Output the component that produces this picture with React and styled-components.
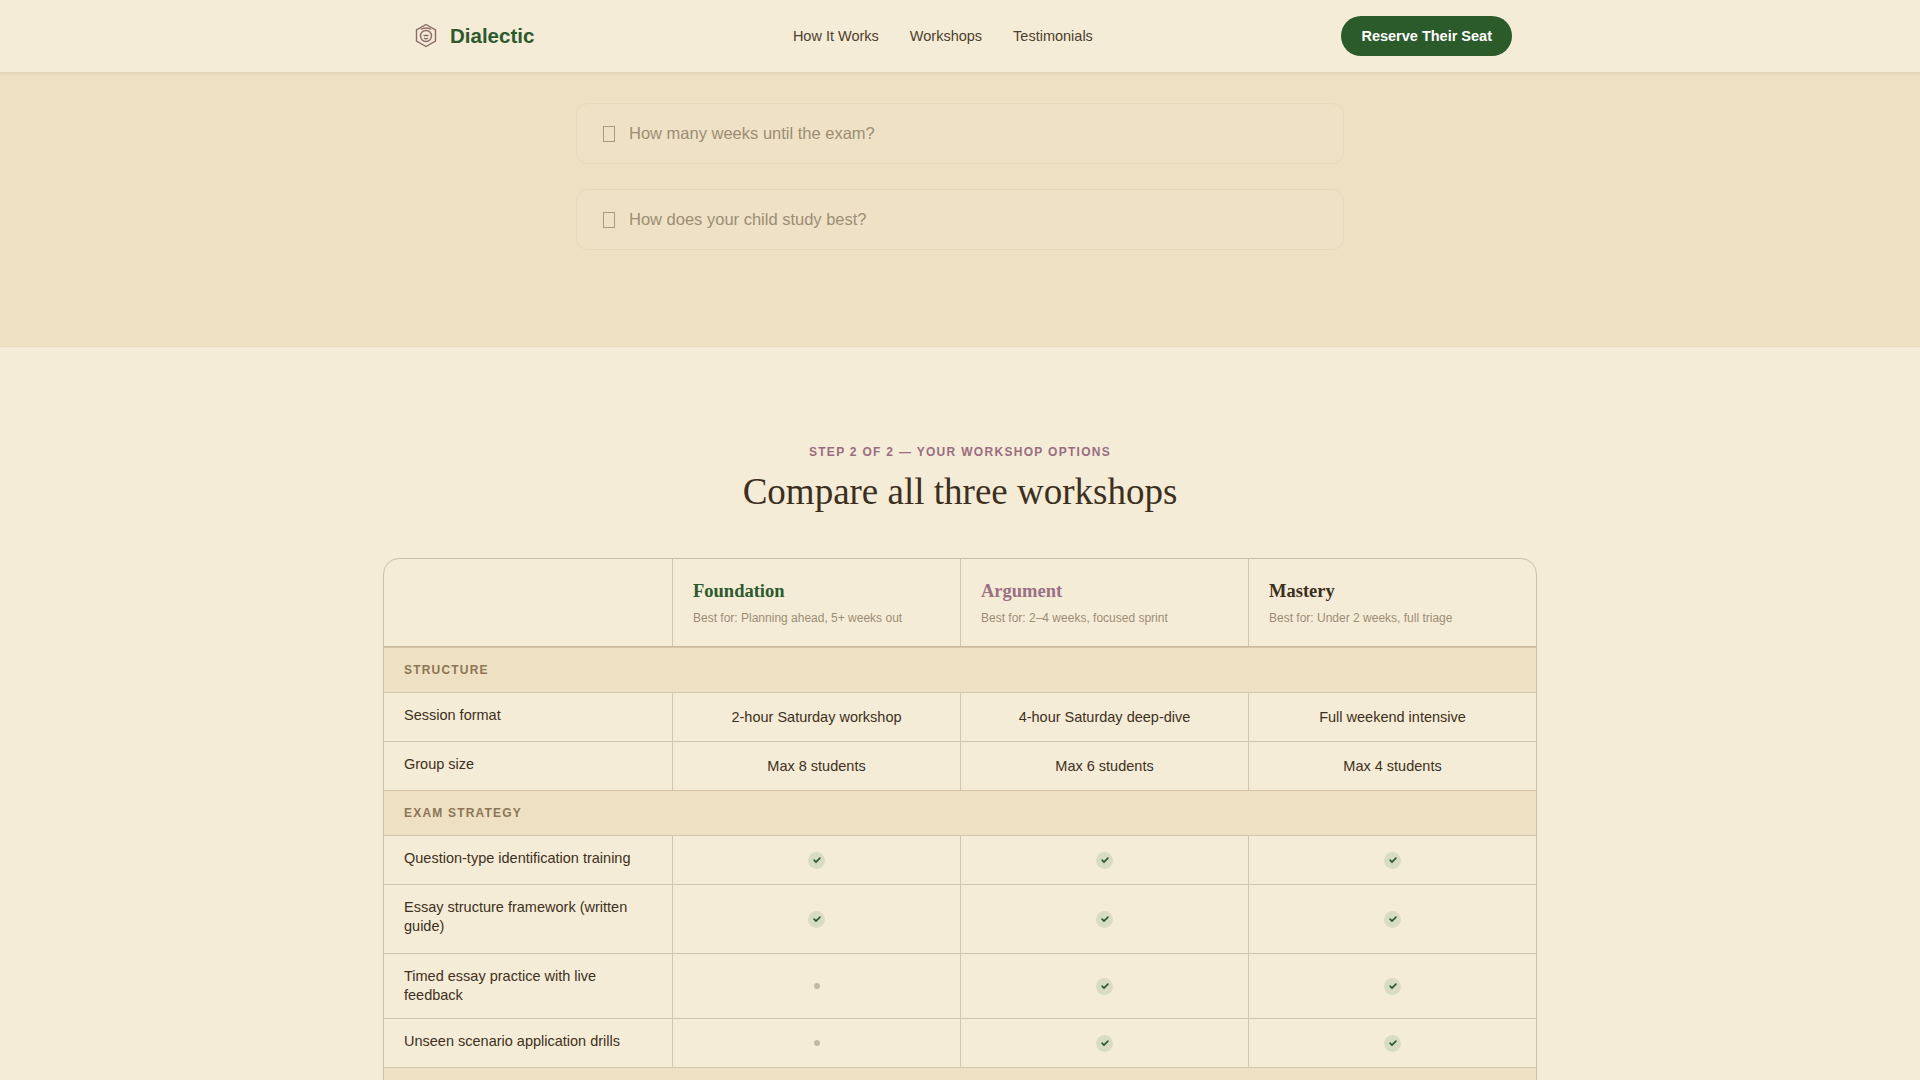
import React from "react";
import styled, { createGlobalStyle } from "styled-components";

const Global = createGlobalStyle`
  body { margin: 0; background: #f5ecd8; font-family: "Liberation Sans", Arial, sans-serif; color: #3d3020; }
`;
const Header = styled.header`
  height: 72px; background: #f5ecd8; border-bottom: 1px solid #e2d5bb;
  box-shadow: 0 1px 3px rgba(120,90,40,0.08); position: relative; z-index: 2;
`;
const Container = styled.div`
  max-width: 1152px; margin: 0 auto; padding: 0 24px; box-sizing: border-box; height: 100%;
  display: flex; align-items: center; justify-content: space-between;
`;
const Logo = styled.div`
  display: flex; align-items: center; gap: 12px; font-weight: 700; font-size: 20.5px; color: #2d5a2d; padding-left: 6px;
`;
const Nav = styled.nav`display: flex; gap: 31px; font-size: 14.5px; color: #4d3f2c; margin-left: 10px;`;
const Button = styled.button`
  background: #2b5a2b; color: #fff; border: none; border-radius: 20px; height: 40px; padding: 0 20px;
  font: 700 14.5px "Liberation Sans", Arial, sans-serif;
`;
const Hero = styled.section`
  background: #ede0c3; height: 274px; padding-top: 30px; box-sizing: border-box;
  display: flex; flex-direction: column; align-items: center; gap: 25px; border-bottom: 1px solid #e6d9be;
`;
const Field = styled.div`
  width: 768px; height: 61px; box-sizing: border-box; border: 1px solid #e6d8bb; border-radius: 12px;
  background: #eee1c6; display: flex; align-items: center; padding-left: 26px; gap: 14px;
  font-size: 16.5px; color: #9c8d74;
`;
const Box = styled.span`width: 10px; height: 14px; border: 1px solid #a89a82; display: inline-block;`;
const Section = styled.section`padding-top: 98px; display: flex; flex-direction: column; align-items: center;`;
const Eyebrow = styled.div`font-size: 12px; font-weight: 700; letter-spacing: 1.3px; color: #9a6d80;`;
const Title = styled.h2`
  font: 400 37px "Liberation Serif", "Times New Roman", serif; color: #3d2f1e; margin: 11px 0 45px;
`;
const Table = styled.div`
  width: 1152px; border: 1px solid #cdbfa6; border-radius: 16px 16px 0 0; overflow: hidden;
`;
const Row = styled.div`
  display: grid; grid-template-columns: repeat(4, 1fr); border-top: 1px solid #d3c5ab;
  &:first-child { border-top: none; }
  min-height: ${p => p.h || 48}px;
`;
const Head = styled.div`
  border-left: 1px solid #d3c5ab; padding: 22px 20px 0; height: 88px; box-sizing: border-box;
  border-bottom: 1px solid #c8b99e;
  &:first-child { border-left: none; }
`;
const Tier = styled.div`font: 700 18.5px "Liberation Serif", serif; color: ${p => p.c};`;
const Best = styled.div`font-size: 12px; color: #9c8c73; margin-top: 9px;`;
const Band = styled.div`
  background: #ede0c3; border-top: 1px solid #d3c5ab; height: 44px; display: flex; align-items: center;
  padding-left: 20px; font-size: 12px; font-weight: 700; letter-spacing: 1.2px; color: #8d7556;
`;
const Label = styled.div`
  padding: 13px 20px; font-size: 14.5px; line-height: 19px; color: #3d3020;
`;
const Cell = styled.div`
  border-left: 1px solid #d3c5ab; display: flex; align-items: center; justify-content: center;
  font-size: 14.5px; color: #3d3020;
`;
const CheckDot = styled.span`
  width: 17px; height: 17px; border-radius: 50%; background: #d8dcc3; display: inline-flex;
  align-items: center; justify-content: center;
`;
const Dash = styled.span`width: 6px; height: 6px; border-radius: 50%; background: #c4b8a3;`;

const Check = () => (
  <CheckDot>
    <svg width="10" height="10" viewBox="0 0 24 24" fill="none" stroke="#2d5a2d" strokeWidth="4" strokeLinecap="round" strokeLinejoin="round"><path d="M5 12.5l4.5 4.5L19 7.5" /></svg>
  </CheckDot>
);

const LogoIcon = () => (
  <svg width="24" height="26" viewBox="0 0 24 26" fill="none" stroke="#8b6a66" strokeWidth="1.4">
    <path d="M12 1.5l9.5 5.5v11L12 23.5 2.5 18V7z" />
    <circle cx="12" cy="13" r="5.5" />
    <path d="M9.5 12.5h5M10 15c1.2 1 2.8 1 4 0M7 6.5c2-2 8-2 10 0" />
  </svg>
);

const V = ({ v }) => (v === true ? <Check /> : v === false ? <Dash /> : v);

const groups = [
  ["STRUCTURE", [
    ["Session format", "2-hour Saturday workshop", "4-hour Saturday deep-dive", "Full weekend intensive"],
    ["Group size", "Max 8 students", "Max 6 students", "Max 4 students"],
  ]],
  ["EXAM STRATEGY", [
    ["Question-type identification training", true, true, true],
    ["Essay structure framework (written guide)", true, true, true, 68],
    ["Timed essay practice with live feedback", false, true, true],
    ["Unseen scenario application drills", false, true, true],
  ]],
  ["CONTENT", [
    ["Core ethical theories overview", true, true, true],
    ["Key philosophers and arguments", true, true, true],
  ]],
];

export default function App() {
  return (
    <>
      <Global />
      <Header>
        <Container>
          <Logo><LogoIcon />Dialectic</Logo>
          <Nav><span>How It Works</span><span>Workshops</span><span>Testimonials</span></Nav>
          <Button>Reserve Their Seat</Button>
        </Container>
      </Header>
      <Hero>
        <Field><Box />How many weeks until the exam?</Field>
        <Field><Box />How does your child study best?</Field>
      </Hero>
      <Section>
        <Eyebrow>STEP 2 OF 2 — YOUR WORKSHOP OPTIONS</Eyebrow>
        <Title>Compare all three workshops</Title>
        <Table>
          <Row>
            <Head />
            <Head><Tier c="#2d5a2d">Foundation</Tier><Best>Best for: Planning ahead, 5+ weeks out</Best></Head>
            <Head><Tier c="#9a7085">Argument</Tier><Best>Best for: 2–4 weeks, focused sprint</Best></Head>
            <Head><Tier c="#3d2f1e">Mastery</Tier><Best>Best for: Under 2 weeks, full triage</Best></Head>
          </Row>
          {groups.map(([g, rows]) => (
            <React.Fragment key={g}>
              <Band>{g}</Band>
              {rows.map(r => (
                <Row key={r[0]} h={r[4]}>
                  <Label>{r[0]}</Label>
                  <Cell><V v={r[1]} /></Cell>
                  <Cell><V v={r[2]} /></Cell>
                  <Cell><V v={r[3]} /></Cell>
                </Row>
              ))}
            </React.Fragment>
          ))}
        </Table>
      </Section>
    </>
  );
}
